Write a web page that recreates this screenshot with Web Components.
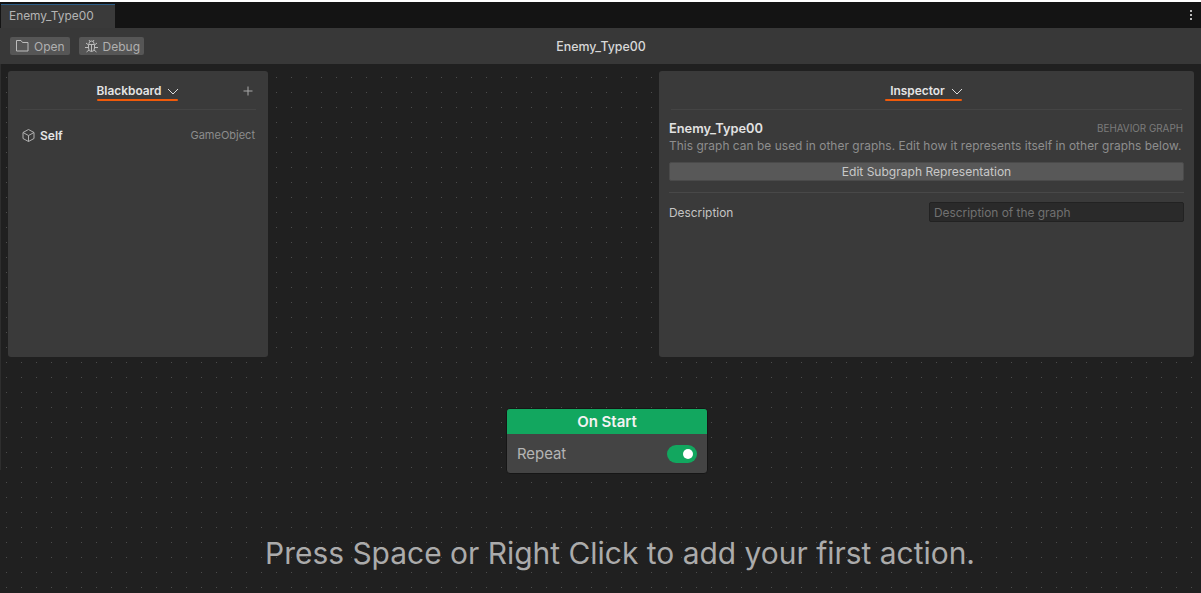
<!DOCTYPE html>
<html>
<head>
<meta charset="utf-8">
<style>
    html, body { margin: 0; height: 100%; background: #202020; overflow: hidden; }
    body { font-family: Inter, "Liberation Sans", sans-serif; }
</style>
</head>
<body>
<graph-window>
    <side-panel slot="left" title-text="Blackboard" adder style="--w:260px;--h:286px;--mark-l:0px;--mark-r:1px">
        <blackboard-row></blackboard-row>
    </side-panel>
    <side-panel slot="right" title-text="Inspector" style="--w:535px;--h:286px;--mark-l:-5px;--mark-r:1px">
        <inspector-body></inspector-body>
    </side-panel>
    <start-node slot="node"></start-node>
</graph-window>
<script>
class GraphWindow extends HTMLElement {
    connectedCallback() {
        const shadow = this.attachShadow({mode: "open"});
        shadow.innerHTML = `
            <style>
                :host { display: flex; flex-direction: column; width: 1201px; height: 593px; overflow: hidden; color: #ddd; font-size: 12px; }
                .strip { height: 2px; background: #fff; flex: none; }
                .tabs { height: 26px; flex: none; background: #141414; display: flex; justify-content: space-between; }
                .tab { width: 114px; margin-left: 1px; height: 24px; box-sizing: border-box; margin-top: 2px; border-top: 1px solid #2c5d87; background: #3a3a3a; color: #b4b4b4; padding: 3px 0 0 8px; font-size: 11.9px; line-height: 16px; }
                .menu { display: flex; flex-direction: column; gap: 2px; margin: 8px 9px 0 0; }
                .menu i { width: 2px; height: 2px; background: #bbb; display: block; }
                .toolbar { height: 36px; flex: none; background: #383838; display: grid; grid-template-columns: 1fr auto 1fr; align-items: center; padding: 0 0 0 10px; box-sizing: border-box; }
                .buttons { display: flex; gap: 9px; }
                .title { font-weight: 500; color: #d8d8d8; font-size: 12.4px; margin-left: -9px; }
                .btn { display: flex; align-items: center; gap: 4px; height: 18px; padding: 0 5px 0 6px; background: #565656; border-radius: 2px; color: #b0b0b0; font-size: 12px; }
                .btn.debug { padding: 0 4px 0 5px; }
                .btn svg { display: block; }
                .canvas { flex: 1; display: flex; flex-direction: column; align-items: center; background-color: #202020;
                    background-image: linear-gradient(#2e2e2e, #2e2e2e), radial-gradient(circle at center, #4c4c4c 0.6px, transparent 0.8px);
                    background-size: 1px 406px, 15px 15px; background-position: 0 0, -1px 6px; background-repeat: no-repeat, repeat; }
                .panels { align-self: stretch; display: flex; justify-content: space-between; padding: 7px 7px 0 8px; }
                .nodewrap { margin-top: 51px; margin-left: 13px; }
                .hint { margin-top: 61px; margin-left: 39px; font-size: 29.95px; line-height: 36px; color: #ababab; white-space: nowrap; }
            </style>
            <div class="strip"></div>
            <div class="tabs">
                <div class="tab">Enemy_Type00</div>
                <div class="menu"><i></i><i></i><i></i></div>
            </div>
            <div class="toolbar">
                <div class="buttons">
                    <div class="btn">
                        <svg width="14" height="12" viewBox="0 0 14 12" fill="none" stroke="#bcbcbc" stroke-width="1"><path d="M0.500 0.500h4.500l1.500 2h5.500v8.500h-11.500z"/></svg>
                        <span>Open</span>
                    </div>
                    <div class="btn debug">
                        <svg width="15" height="14" viewBox="0 0 15 14" fill="none" stroke="#bcbcbc" stroke-width="1"><path d="M4.500 5.500h6v3.500a3 3.500 0 0 1-6 0zM5 5.500v-1a2.500 2.500 0 0 1 5 0v1M7.500 6v6.500M4.500 8.500H1M10.500 8.500H14M4.500 6L2 4M10.500 6l2.500-2M5 11l-2.500 2M10 11l2.500 2M5 1l1 1.500M10 1L9 2.500"/></svg>
                        <span>Debug</span>
                    </div>
                </div>
                <div class="title">Enemy_Type00</div>
                <div></div>
            </div>
            <div class="canvas">
                <div class="panels">
                    <slot name="left"></slot>
                    <slot name="right"></slot>
                </div>
                <div class="nodewrap"><slot name="node"></slot></div>
                <div class="hint">Press Space or Right Click to add your first action.</div>
            </div>
        `;
    }
}

class SidePanel extends HTMLElement {
    connectedCallback() {
        const shadow = this.attachShadow({mode: "open"});
        const title = this.getAttribute("title-text");
        const adder = this.hasAttribute("adder");
        shadow.innerHTML = `
            <style>
                :host { display: block; width: var(--w); height: var(--h); background: #3a3a3a; border-radius: 3px; box-sizing: border-box; color: #ddd; }
                .head { position: relative; height: 39px; margin: 0 12px; border-bottom: 1px solid #444; display: flex; justify-content: center; align-items: flex-start; box-sizing: border-box; }
                .name { position: relative; display: flex; align-items: center; gap: 6px; margin-top: 13px; font-size: 11.9px; line-height: 14px; font-weight: 600; color: #e4e4e4; }
                .name svg { display: block; }
                .mark { position: absolute; left: var(--mark-l); right: var(--mark-r); top: 15px; height: 2px; background: #f05a0a; border-radius: 1px; }
                .plus { position: absolute; right: 0; top: 12px; width: 16px; height: 16px; }
                .plus svg { display: block; }
            </style>
            <div class="head">
                <div class="name">
                    <span>${title}</span>
                    <svg width="12" height="7" viewBox="0 0 12 7" fill="none" stroke="#dcdcdc" stroke-width="1"><path d="M1 1l5 5 5-5"/></svg>
                    <div class="mark"></div>
                </div>
                ${adder ? `<div class="plus"><svg width="16" height="16" viewBox="0 0 16 16" stroke="#a8a8a8" stroke-width="1"><path d="M8 3.500v9M3.500 8h9"/></svg></div>` : ""}
            </div>
            <slot></slot>
        `;
    }
}

class BlackboardRow extends HTMLElement {
    connectedCallback() {
        const shadow = this.attachShadow({mode: "open"});
        shadow.innerHTML = `
            <style>
                :host { display: flex; align-items: center; padding: 15px 13px 0 13px; height: 20px; font-size: 12px; }
                svg { display: block; margin-right: 4px; }
                .self { font-weight: 600; color: #e6e6e6; flex: 1; }
                .type { color: #8c8c8c; font-size: 11px; }
            </style>
            <svg width="15" height="15" viewBox="0 0 15 15" fill="none" stroke="#b0b0b0" stroke-width="1" stroke-linejoin="round"><path d="M7.500 1.500l5.500 3v6l-5.500 3-5.500-3v-6zM2 4.500l5.500 3 5.500-3M7.500 7.500v6"/></svg>
            <span class="self">Self</span>
            <span class="type">GameObject</span>
        `;
    }
}

class InspectorBody extends HTMLElement {
    connectedCallback() {
        const shadow = this.attachShadow({mode: "open"});
        shadow.innerHTML = `
            <style>
                :host { display: block; padding: 10px 10px 0 10px; font-size: 11.9px; }
                .top { display: flex; justify-content: space-between; align-items: center; height: 16px; }
                .name { font-weight: 600; font-size: 12.8px; color: #e2e2e2; }
                .kind { color: #7c7c7c; font-size: 9.85px; margin-right: 1px; }
                .note { color: #8e8e8e; line-height: 16px; margin-top: 2px; white-space: nowrap; letter-spacing: 0.05px; }
                .edit { margin-top: 8px; height: 19px; background: #585858; border: 1px solid #4a4a4a; border-radius: 2px; box-sizing: border-box; text-align: center; line-height: 17px; color: #c8c8c8; font-size: 12.05px; }
                hr { border: 0; border-top: 1px solid #484848; margin: 11px 0 9px; }
                .field { display: flex; justify-content: space-between; align-items: center; height: 20px; }
                .label { color: #c4c4c4; }
                .input { width: 255px; height: 20px; box-sizing: border-box; background: #2a2a2a; border: 1px solid #222; border-radius: 2px; color: #717171; padding-left: 4px; line-height: 19px; }
            </style>
            <div class="top"><span class="name">Enemy_Type00</span><span class="kind">BEHAVIOR GRAPH</span></div>
            <div class="note">This graph can be used in other graphs. Edit how it represents itself in other graphs below.</div>
            <div class="edit">Edit Subgraph Representation</div>
            <hr>
            <div class="field"><span class="label">Description</span><div class="input">Description of the graph</div></div>
        `;
    }
}

class StartNode extends HTMLElement {
    connectedCallback() {
        const shadow = this.attachShadow({mode: "open"});
        shadow.innerHTML = `
            <style>
                :host { display: block; width: 202px; height: 66px; box-sizing: border-box; border: 1px solid #161616; border-radius: 4px; overflow: hidden; background: #444; }
                .head { height: 25px; background: #12a75f; color: #f2f2f2; font-weight: 600; font-size: 15px; line-height: 26px; text-align: center; }
                .row { display: flex; justify-content: space-between; align-items: center; height: 39px; padding: 0 10px; color: #b4b4b4; font-size: 14.9px; }
                .switch { width: 30px; height: 18px; border-radius: 9px; background: #12a75f; display: flex; justify-content: flex-end; align-items: center; padding-right: 4px; box-sizing: border-box; }
                .switch i { display: block; width: 10px; height: 10px; border-radius: 50%; background: #fff; }
            </style>
            <div class="head">On Start</div>
            <div class="row"><span>Repeat</span><div class="switch"><i></i></div></div>
        `;
    }
}

customElements.define("graph-window", GraphWindow);
customElements.define("side-panel", SidePanel);
customElements.define("blackboard-row", BlackboardRow);
customElements.define("inspector-body", InspectorBody);
customElements.define("start-node", StartNode);
</script>
</body>
</html>
